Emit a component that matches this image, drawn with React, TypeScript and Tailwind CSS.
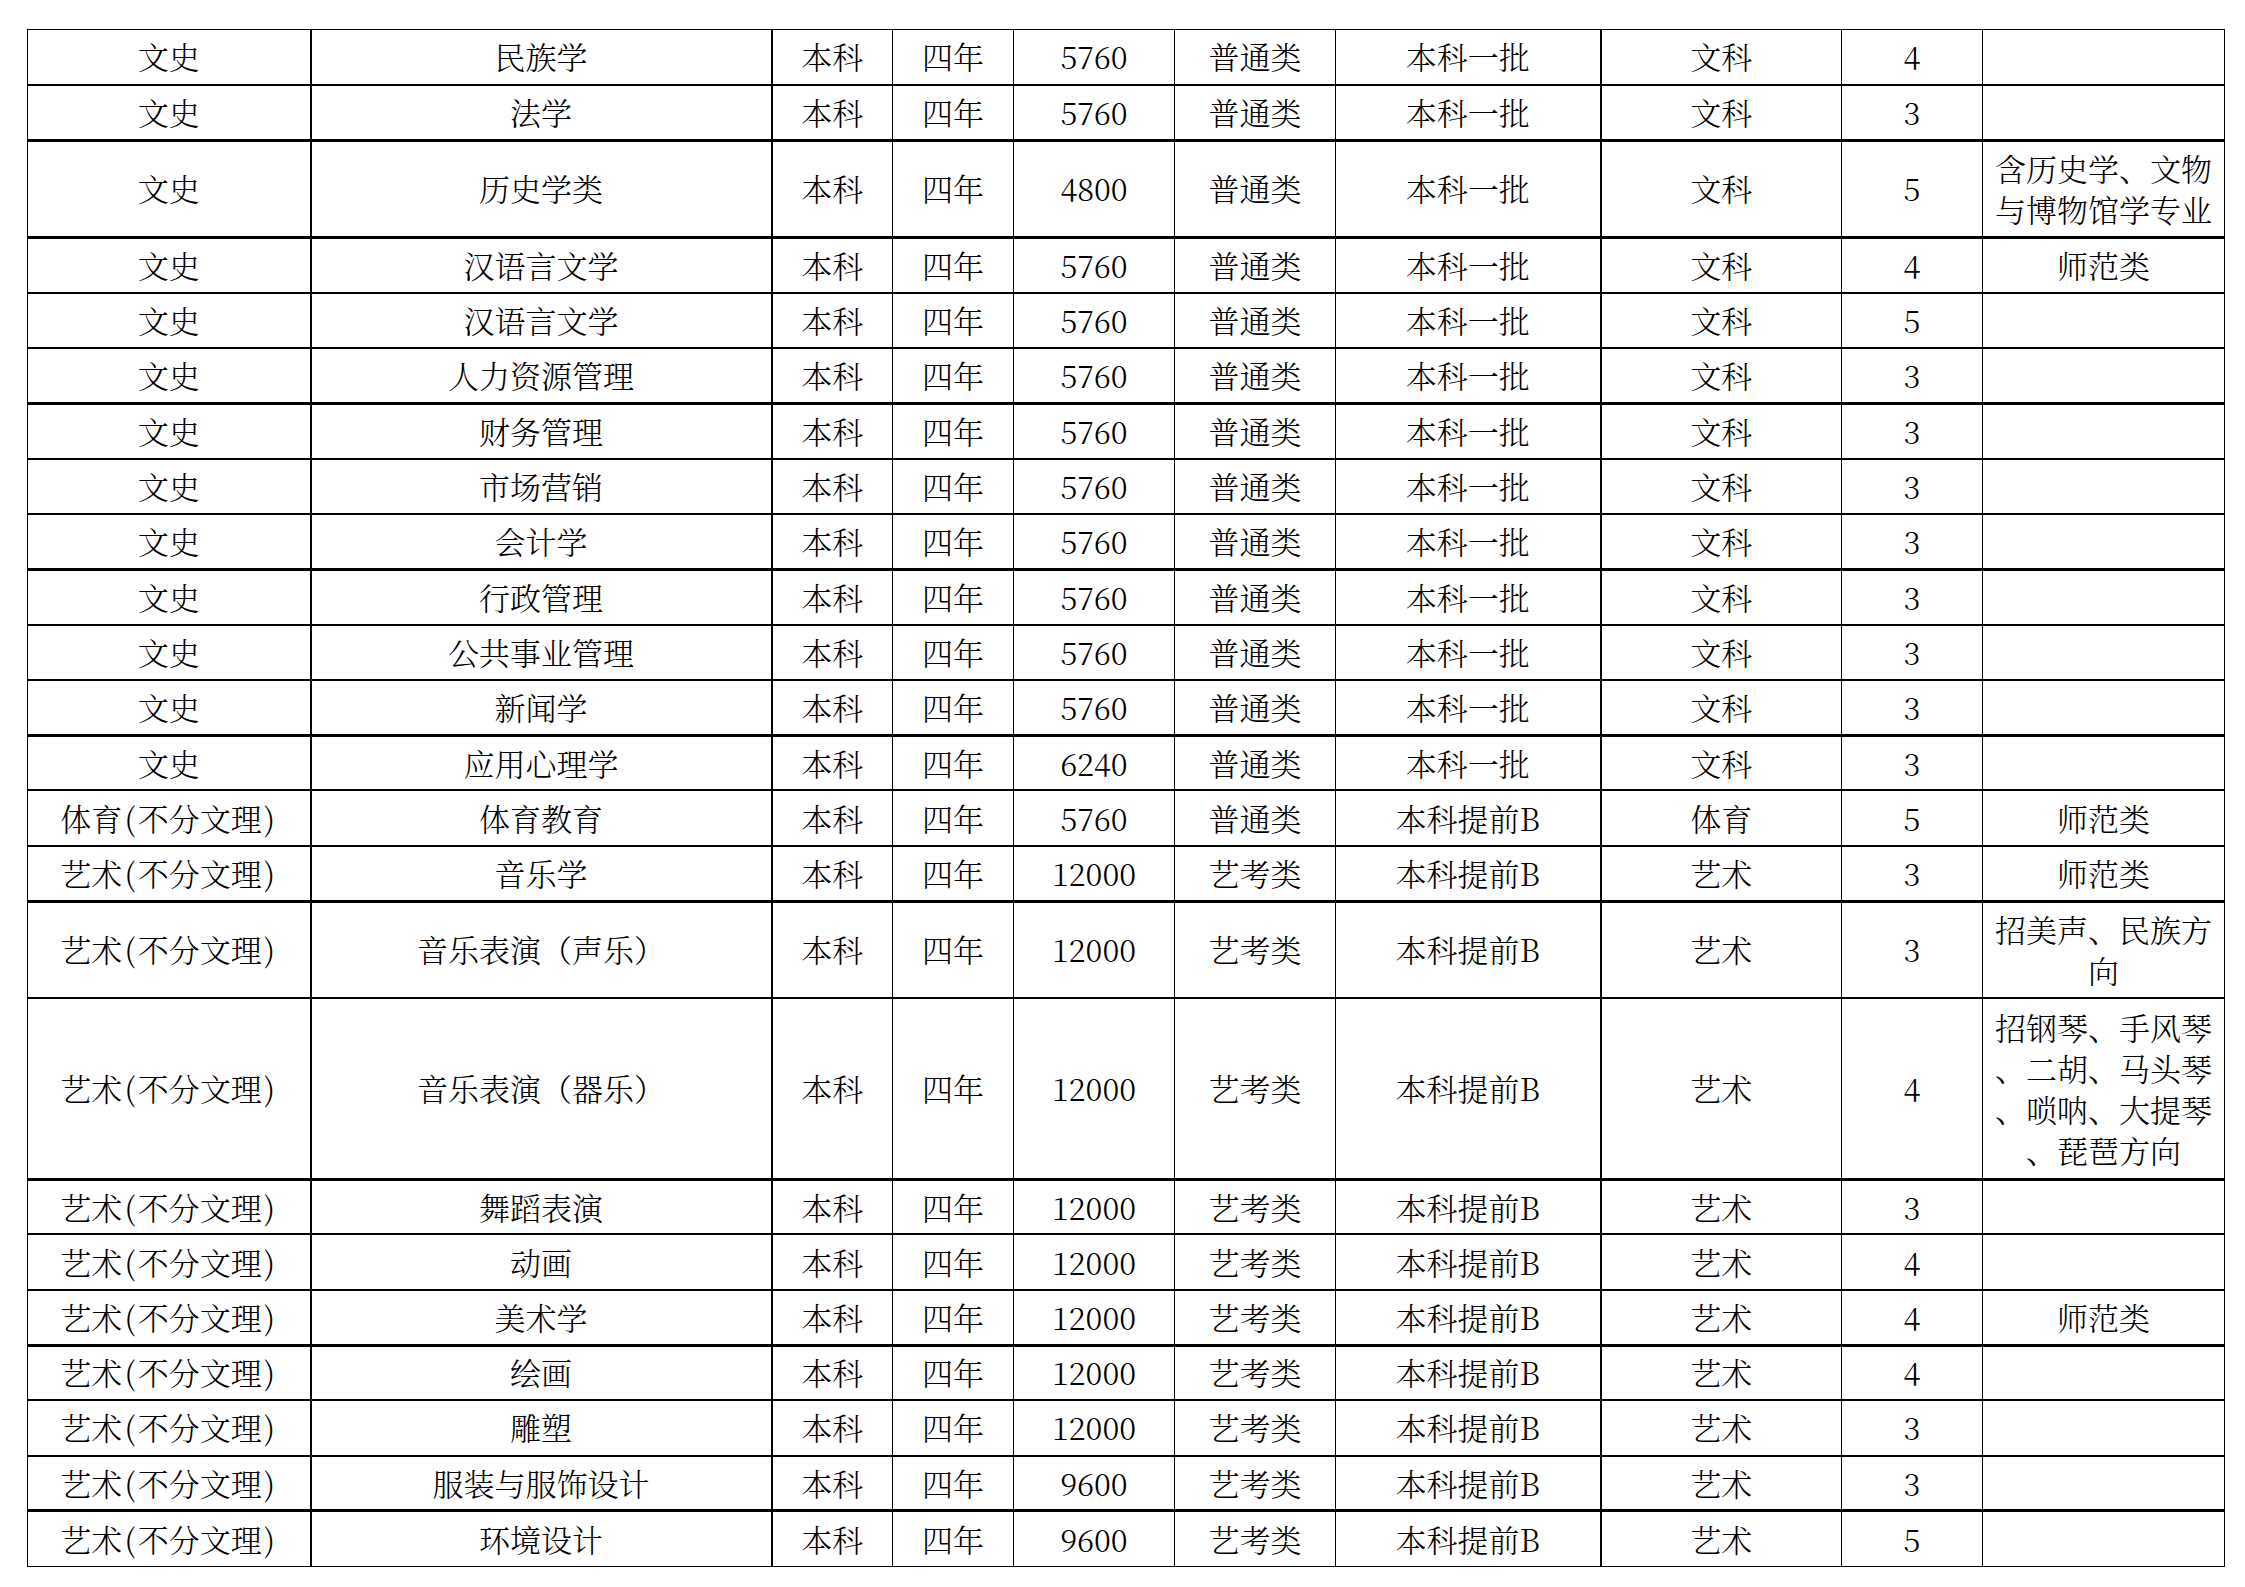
import React from 'react';

type Row = {
  cat: string;
  major: string;
  fee: string;
  kind: string;
  batch: string;
  subject: string;
  years: string;
  note?: string[];
  h: string;
  b: string;
};

const wenshi = (major: string, fee: string, years: string, b: string, note?: string[], h = 'h-[55.3px]'): Row => ({
  cat: '文史', major, fee, kind: '普通类', batch: '本科一批', subject: '文科', years, note, h, b,
});

const yishu = (major: string, fee: string, years: string, b: string, note?: string[], h = 'h-[55.3px]'): Row => ({
  cat: '艺术(不分文理)', major, fee, kind: '艺考类', batch: '本科提前B', subject: '艺术', years, note, h, b,
});

const rows: Row[] = [
  wenshi('民族学', '5760', '4', 'border-b-2'),
  wenshi('法学', '5760', '3', 'border-b-[3px]'),
  wenshi('历史学类', '4800', '5', 'border-b-[3px]', ['含历史学、文物', '与博物馆学专业'], 'h-[97.4px]'),
  wenshi('汉语言文学', '5760', '4', 'border-b-2', ['师范类']),
  wenshi('汉语言文学', '5760', '5', 'border-b-2'),
  wenshi('人力资源管理', '5760', '3', 'border-b-[3px]'),
  wenshi('财务管理', '5760', '3', 'border-b-2'),
  wenshi('市场营销', '5760', '3', 'border-b-2'),
  wenshi('会计学', '5760', '3', 'border-b-[3px]'),
  wenshi('行政管理', '5760', '3', 'border-b-2'),
  wenshi('公共事业管理', '5760', '3', 'border-b-2'),
  wenshi('新闻学', '5760', '3', 'border-b-[3px]'),
  wenshi('应用心理学', '6240', '3', 'border-b-2'),
  {
    cat: '体育(不分文理)', major: '体育教育', fee: '5760', kind: '普通类', batch: '本科提前B',
    subject: '体育', years: '5', note: ['师范类'], h: 'h-[55.3px]', b: 'border-b-2',
  },
  yishu('音乐学', '12000', '3', 'border-b-[3px]', ['师范类']),
  yishu('音乐表演（声乐）', '12000', '3', 'border-b-2', ['招美声、民族方', '向'], 'h-[97.4px]'),
  yishu('音乐表演（器乐）', '12000', '4', 'border-b-[3px]', ['招钢琴、手风琴', '、二胡、马头琴', '、唢呐、大提琴', '、琵琶方向'], 'h-[180.7px]'),
  yishu('舞蹈表演', '12000', '3', 'border-b-2'),
  yishu('动画', '12000', '4', 'border-b-2'),
  yishu('美术学', '12000', '4', 'border-b-[3px]', ['师范类']),
  yishu('绘画', '12000', '4', 'border-b-2'),
  yishu('雕塑', '12000', '3', 'border-b-2'),
  yishu('服装与服饰设计', '9600', '3', 'border-b-[3px]'),
  yishu('环境设计', '9600', '5', 'border-b'),
];

const cell = 'px-1 pt-0 pb-[2px] text-center align-middle whitespace-nowrap border-black';

// half-width brackets, as in the source table's font
const Category = ({ text }: { text: string }) => {
  const parts = text.split(/([()])/);
  return (
    <>
      {parts.map((p, i) =>
        p === '(' || p === ')' ? (
          <span key={i} className="inline-block w-[15.5px] text-center">{p}</span>
        ) : (
          <React.Fragment key={i}>{p}</React.Fragment>
        )
      )}
    </>
  );
};

export default function App() {
  return (
    <div className="min-h-screen bg-white pl-[27px] pt-[29px] text-black font-light text-[31px] leading-[41px] [font-family:'Noto_Serif_CJK_SC','Liberation_Serif','Noto_Sans_CJK_SC',serif]">
      <table className="table-fixed border-collapse border-t border-l border-r border-black w-[2198px]">
        <colgroup>
          <col className="w-[283px]" />
          <col className="w-[461px]" />
          <col className="w-[121px]" />
          <col className="w-[121px]" />
          <col className="w-[161px]" />
          <col className="w-[161px]" />
          <col className="w-[265px]" />
          <col className="w-[241px]" />
          <col className="w-[141px]" />
          <col className="w-[242px]" />
        </colgroup>
        <tbody>
          {rows.map((r, i) => (
            <tr key={i} className={`${r.h} ${r.b} border-black`}>
              <td className={`${cell} border-r-2`}><Category text={r.cat} /></td>
              <td className={`${cell} border-r-2`}>{r.major}</td>
              <td className={`${cell} border-r`}>本科</td>
              <td className={`${cell} border-r`}>四年</td>
              <td className={`${cell} border-r`}>{r.fee}</td>
              <td className={`${cell} border-r`}>{r.kind}</td>
              <td className={`${cell} border-r-2`}>{r.batch}</td>
              <td className={`${cell} border-r`}>{r.subject}</td>
              <td className={`${cell} border-r`}>{r.years}</td>
              <td className={`${cell}`}>
                {r.note?.map((line, j) => (
                  <div key={j}>{line}</div>
                ))}
              </td>
            </tr>
          ))}
        </tbody>
      </table>
    </div>
  );
}
